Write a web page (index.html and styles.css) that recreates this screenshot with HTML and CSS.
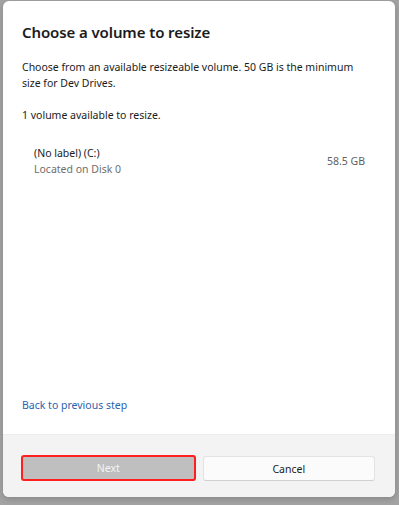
FILE: index.html
```html
<!DOCTYPE html>
<html>
<head>
<meta charset="utf-8">
<link rel="stylesheet" href="styles.css">
</head>
<body>
<div class="dialog">
  <div class="content">
    <h1 class="title">Choose a volume to resize</h1>
    <p class="desc">Choose from an available resizeable volume. 50 GB is the minimum size for Dev Drives.</p>
    <p class="count">1 volume available to resize.</p>
    <div class="volume">
      <div class="vol-info">
        <div class="vol-name">(No label) (C:)</div>
        <div class="vol-loc">Located on Disk 0</div>
      </div>
      <div class="vol-size">58.5 GB</div>
    </div>
    <div class="spacer"></div>
    <a class="back" href="#">Back to previous step</a>
  </div>
  <div class="footer">
    <button class="btn btn-next" disabled>Next</button>
    <button class="btn btn-cancel">Cancel</button>
  </div>
</div>
</body>
</html>
```
FILE: styles.css
```css
* { box-sizing: border-box; }
html, body {
  margin: 0;
  padding: 0;
  width: 399px;
  height: 505px;
  overflow: hidden;
}
body {
  background: #a3a3a3;
  font-family: "Noto Sans", "Segoe UI", sans-serif;
  padding: 1px 4px 8px 3px;
}
.dialog {
  width: 392px;
  height: 496px;
  background: #ffffff;
  border-radius: 6px;
  overflow: hidden;
  display: flex;
  flex-direction: column;
  box-shadow: 0 2px 6px rgba(0,0,0,0.18);
}
.content {
  flex: 1;
  display: flex;
  flex-direction: column;
  padding: 20px 19px 0 19px;
}
.title {
  margin: 0;
  font-size: 15px;
  font-weight: 600;
  color: #1b1b1b;
  line-height: 22px;
  letter-spacing: -0.1px;
}
.desc {
  margin: 17px 0 0 0;
  max-width: 332px;
  font-size: 10.5px;
  line-height: 15.5px;
  color: #1b1b1b;
}
.count {
  margin: 17px 0 0 0;
  font-size: 10.5px;
  line-height: 15.5px;
  color: #1b1b1b;
}
.volume {
  margin-top: 21px;
  display: flex;
  align-items: center;
  justify-content: space-between;
  padding: 0 11px 0 12px;
}
.vol-name {
  font-size: 10.5px;
  line-height: 16px;
  color: #1b1b1b;
}
.vol-loc {
  font-size: 10.5px;
  line-height: 16px;
  color: #6e6e6e;
}
.vol-size {
  font-size: 10.5px;
  color: #606060;
}
.spacer { flex: 1; }
.back {
  font-size: 10.5px;
  line-height: 16px;
  color: #2c62ad;
  text-decoration: none;
  margin-bottom: 21px;
  align-self: flex-start;
}
.footer {
  height: 63px;
  background: #f3f3f3;
  border-top: 1px solid #ececec;
  display: flex;
  gap: 7px;
  padding: 20px 20px 0 18px;
}
.btn {
  flex: 1;
  height: 26px;
  font-family: inherit;
  font-size: 10.5px;
  border-radius: 3px;
  padding: 0;
}
.btn-next {
  background: #bfbfbf;
  color: #f4f4f4;
  border: 2px solid #ff1f1f;
}
.btn-cancel {
  height: 25px;
  margin-top: 1px;
  background: #fbfbfb;
  color: #1b1b1b;
  border: 1px solid #e3e3e3;
  border-bottom-color: #d0d0d0;
}
```
